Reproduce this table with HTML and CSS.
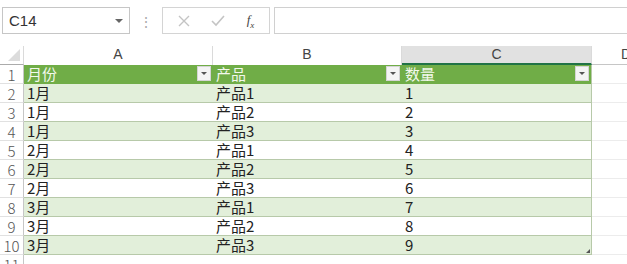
FILE: index.html
```html
<!DOCTYPE html>
<html lang="zh-CN">
<head>
    <meta charset="UTF-8">
    <title>数量表</title>
    <link rel="stylesheet" href="styles.css">
</head>
<body>
    <div class="formula-bar">
        <div class="name-box">
            <span>C14</span>
            <span class="caret"></span>
        </div>
        <div class="grip">⋮</div>
        <div class="fx-buttons">
            <svg width="12" height="12" viewBox="0 0 12 12"><path d="M1 1 L11 11 M11 1 L1 11" stroke="#c4c4c4" stroke-width="1.4" fill="none"/></svg>
            <svg width="14" height="12" viewBox="0 0 14 12"><path d="M1 6 L5 10 L13 1" stroke="#c4c4c4" stroke-width="1.6" fill="none"/></svg>
            <span class="fx">f<sub>x</sub></span>
        </div>
        <div class="formula-input"></div>
    </div>

    <div class="sheet">
        <div class="corner"></div>
        <div class="col-head">A</div>
        <div class="col-head">B</div>
        <div class="col-head selected">C</div>
        <div class="col-head last">D</div>

        <div class="row-num">1</div>
        <div class="cell head">月份<span class="filter"></span></div>
        <div class="cell head">产品<span class="filter"></span></div>
        <div class="cell head edge">数量<span class="filter"></span></div>
        <div class="cell blank"></div>

        <div class="row-num">2</div>
        <div class="cell band">1月</div>
        <div class="cell band">产品1</div>
        <div class="cell band edge">1</div>
        <div class="cell blank"></div>

        <div class="row-num">3</div>
        <div class="cell">1月</div>
        <div class="cell">产品2</div>
        <div class="cell edge">2</div>
        <div class="cell blank"></div>

        <div class="row-num">4</div>
        <div class="cell band">1月</div>
        <div class="cell band">产品3</div>
        <div class="cell band edge">3</div>
        <div class="cell blank"></div>

        <div class="row-num">5</div>
        <div class="cell">2月</div>
        <div class="cell">产品1</div>
        <div class="cell edge">4</div>
        <div class="cell blank"></div>

        <div class="row-num">6</div>
        <div class="cell band">2月</div>
        <div class="cell band">产品2</div>
        <div class="cell band edge">5</div>
        <div class="cell blank"></div>

        <div class="row-num">7</div>
        <div class="cell">2月</div>
        <div class="cell">产品3</div>
        <div class="cell edge">6</div>
        <div class="cell blank"></div>

        <div class="row-num">8</div>
        <div class="cell band">3月</div>
        <div class="cell band">产品1</div>
        <div class="cell band edge">7</div>
        <div class="cell blank"></div>

        <div class="row-num">9</div>
        <div class="cell">3月</div>
        <div class="cell">产品2</div>
        <div class="cell edge">8</div>
        <div class="cell blank"></div>

        <div class="row-num">10</div>
        <div class="cell band">3月</div>
        <div class="cell band">产品3</div>
        <div class="cell band edge resize">9</div>
        <div class="cell blank"></div>

        <div class="row-num">11</div>
        <div class="cell blank"></div>
        <div class="cell blank"></div>
        <div class="cell blank"></div>
        <div class="cell blank"></div>
    </div>
</body>
</html>
```

FILE: styles.css
```css
body {
    margin: 0;
    background-color: #fff;
    font-family: "Noto Sans CJK SC", "Noto Sans", sans-serif;
    color: #222;
    overflow: hidden;
}

/* Formula bar */
.formula-bar {
    display: flex;
    align-items: center;
    height: 27px;
    padding: 7px 0 0 2px;
}
.name-box {
    display: flex;
    align-items: center;
    justify-content: space-between;
    box-sizing: border-box;
    width: 128px;
    height: 27px;
    border: 1px solid #c6c6c6;
    padding: 0 6px 0 6px;
    font-family: "Liberation Sans", sans-serif;
    font-size: 15px;
    color: #333;
}
.caret {
    width: 0;
    height: 0;
    border-left: 4px solid transparent;
    border-right: 4px solid transparent;
    border-top: 4px solid #666;
}
.grip {
    width: 32px;
    text-align: center;
    color: #aaa;
    font-size: 14px;
}
.fx-buttons {
    display: flex;
    align-items: center;
    justify-content: space-around;
    box-sizing: border-box;
    width: 108px;
    height: 27px;
    border: 1px solid #d4d4d4;
    padding: 0 4px;
}
.fx {
    font-family: "Liberation Serif", serif;
    font-style: italic;
    font-size: 13px;
    color: #444;
}
.fx sub {
    font-size: 9px;
}
.formula-input {
    flex: 1;
    height: 27px;
    box-sizing: border-box;
    margin-left: 4px;
    border-top: 1px solid #d0d0d0;
    border-bottom: 1px solid #d0d0d0;
    border-left: 1px solid #d0d0d0;
}

/* Sheet grid */
.sheet {
    display: grid;
    grid-template-columns: 24px 189px 189px 190px 35px;
    grid-template-rows: 19px repeat(11, 19px);
    margin-top: 12px;
}
.corner {
    position: relative;
    border-right: 1px solid #dadada;
    border-bottom: 1px solid #ababab;
}
.corner::after {
    content: "";
    position: absolute;
    right: 3px;
    bottom: 3px;
    border-left: 12px solid transparent;
    border-bottom: 12px solid #dcdcdc;
}
.col-head {
    box-sizing: border-box;
    border-right: 1px solid #dadada;
    text-align: center;
    font-family: "Liberation Sans", sans-serif;
    font-size: 14px;
    line-height: 17px;
    color: #444;
}
.col-head.selected {
    background-color: #e1e1e1;
    border-bottom: 2px solid #217346;
}
.col-head.last {
    text-align: right;
    border-right: none;
    border-bottom: 1px solid #c6c6c6;
    overflow: hidden;
    white-space: nowrap;
    padding-right: 0;
    margin-right: -4px;
}
.row-num {
    box-sizing: border-box;
    border-right: 1px solid #c6c6c6;
    border-bottom: 1px solid #e1e1e1;
    text-align: center;
    font-size: 15px;
    font-weight: 300;
    line-height: 19px;
    color: #555;
}
.cell {
    position: relative;
    box-sizing: border-box;
    padding-left: 3px;
    border-bottom: 1px solid #b7c9a9;
    font-size: 15px;
    line-height: 18px;
    white-space: nowrap;
}
.cell.head {
    background-color: #70ad47;
    color: #f2f8ec;
    border-bottom: none;
}
.cell.band {
    background-color: #e2efda;
}
.cell.edge {
    border-right: 1px solid #b7c9a9;
}
.cell.blank {
    border-bottom: 1px solid #ececec;
}
.filter {
    position: absolute;
    right: 2px;
    top: 1px;
    width: 14px;
    height: 15px;
    background-color: #f4f4f4;
    border: 1px solid #d4d4d4;
    box-sizing: border-box;
}
.filter::after {
    content: "";
    position: absolute;
    left: 3px;
    top: 5px;
    border-left: 3px solid transparent;
    border-right: 3px solid transparent;
    border-top: 3px solid #555;
}
.resize::after {
    content: "";
    position: absolute;
    right: 1px;
    bottom: 1px;
    border-left: 4px solid transparent;
    border-bottom: 4px solid #555;
}
```
